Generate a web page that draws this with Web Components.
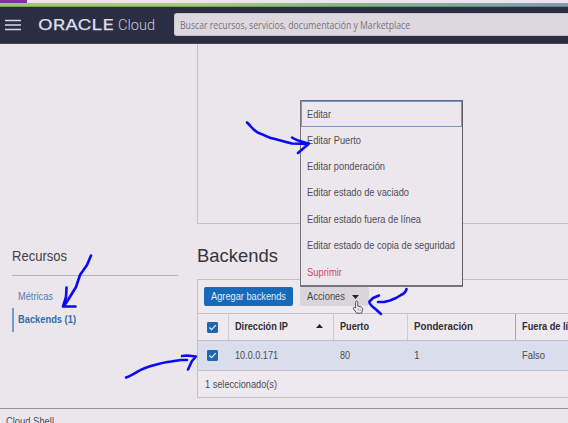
<!DOCTYPE html>
<html lang="es">
<head>
<meta charset="utf-8">
<title>Oracle Cloud - Backends</title>
<style>
html,body{margin:0;height:100%;overflow:hidden}
body{background:#ebe6ec;font:10px "Liberation Sans",Arial,sans-serif;color:#4c4a52}
</style>
</head>
<body>
<cloud-console></cloud-console>
<script>
const define=(name,html,setup)=>customElements.define(name,class extends HTMLElement{
  connectedCallback(){
    if(this.shadowRoot)return;
    this.attachShadow({mode:'open'}).innerHTML=html;
    if(setup)setup.call(this,this.shadowRoot);
  }
});

/* Single-line label, condensed or widened to the width in its "w" attribute. */
define('ui-label','<style>:host{display:inline-block;white-space:nowrap;flex:none}span{display:inline-block;transform-origin:0 50%}</style><span><slot></slot></span>',function(root){
  const w=+this.getAttribute('w');
  if(!w)return;
  const span=root.querySelector('span');
  const natural=span.getBoundingClientRect().width;
  this.style.width=w+'px';
  span.style.transform='scaleX('+w/natural+')';
});

define('ui-check',`<style>:host{display:block;width:11px;height:11px;flex:none}svg{display:block}</style>
<svg width="11" height="11" viewBox="0 0 11 11"><rect width="11" height="11" rx="1.4" fill="#1c68b0"/><path d="M2.4 5.5 4.6 7.7 8.8 3.1" fill="none" stroke="#e9edf6" stroke-width="1.2"/></svg>`);

define('app-header',`<style>
:host{display:block}
.tabs{height:3px;background:#efe3f1}
.tabs i{display:block;width:27px;height:3px;background:#8232a0}
.glow{height:4px;background:linear-gradient(#0000 70%,#1f3d3a80),linear-gradient(90deg,#a0c86c,#a4cc76 35%,#84b880 60%,#80a9a4 85%,#8299ae)}
.bar{display:flex;align-items:center;height:36px;background:#2b2e43;border-bottom:1px solid #4a3f50;box-sizing:content-box}
svg{display:block;flex:none}
.menu{margin-left:5px}
.logo{margin-left:16px}
.search{box-sizing:border-box;height:23px;margin:-1px 0 0 15px;flex:1;background:#ddd8e0;border:1px solid #c9c3cd;border-right:0;border-radius:3px 0 0 3px;display:flex;align-items:center;padding:1px 0 0 5px;color:#77727e;font:10px "Open Sans","Noto Sans",sans-serif}
</style>
<div class="tabs"><i></i></div><div class="glow"></div>
<div class="bar">
<svg class="menu" width="16" height="12" viewBox="0 0 16 12"><path d="M0 1.500H16M0 6H16M0 10.500H16" stroke="#d9d7e4" stroke-width="1.4"/></svg>
<svg class="logo" width="122" height="20" viewBox="0 0 122 20">
<text x="1" y="15" font-family="Inter,sans-serif" font-size="14" font-weight="400" fill="#dddce8" stroke="#dddce8" stroke-width=".25" textLength="76" lengthAdjust="spacingAndGlyphs">ORACLE</text>
<text x="81" y="15.300" font-family="Roboto,sans-serif" font-weight="300" font-size="15.500" fill="#c9c8d6" textLength="37" lengthAdjust="spacingAndGlyphs">Cloud</text></svg>
<div class="search"><ui-label w="230">Buscar recursos, servicios, documentación y Marketplace</ui-label></div>
</div>`);

define('resource-nav',`<style>
:host{display:block;padding:203px 0 0 12px;width:166px}
h2{margin:0;height:28px;border-bottom:1px solid #b8b3ba;font:14.500px/18px "Liberation Sans",sans-serif;color:#444149}
a{box-sizing:border-box;display:flex;align-items:center;height:24px;padding-left:6px;color:#4d7eb6}
a:first-of-type{margin-top:8px}
a.on{font-weight:bold;color:#316dad;border-left:2px solid #6f9cc9;padding:0 0 1px 4px}
</style>
<h2><ui-label w="55">Recursos</ui-label></h2>
<a><ui-label w="35">Métricas</ui-label></a><a class="on"><ui-label w="58">Backends (1)</ui-label></a>`);

define('backend-table',`<style>
:host{display:block;border:1px solid #c5c0c8;border-right:0;background:#eee9ef}
.tools{display:flex;align-items:center;gap:7px;height:33px;padding-left:6px}
button{box-sizing:border-box;border:0;margin:0;padding:0;height:19px;border-radius:2px;font:10px "Liberation Sans",sans-serif;display:flex;align-items:center}
.add{background:#1769b9;color:#e2ebf7;width:89px;justify-content:center}
.act{background:#d9d5da;color:#4b4850;width:69px;padding-left:7px;gap:7px}
.row{display:grid;grid-template-columns:30px 105px 74px 108px 1fr;border-top:1px solid #c5c0c8;height:26px}
.row>*{display:flex;align-items:center;padding:0 0 2px 6px;border-left:1px solid #cfcad1;white-space:nowrap;overflow:hidden}
.row>:first-child{border-left:0;padding:0 0 0 9px}
.head{color:#302d35;font-weight:bold}
.head>:last-child{border-left-color:#aaa5ad}
.data{height:29px;background:#dadeec}
.data>*{border-left-color:transparent;padding-bottom:1px}
.up{margin-left:28px}
.foot{height:26px;border-top:1px solid #c5c0c8;display:flex;align-items:center;padding-left:7px}
</style>
<div class="tools"><button class="add"><ui-label w="75">Agregar backends</ui-label></button>
<button class="act"><ui-label w="38">Acciones</ui-label><svg width="7" height="4"><path d="M0 0H7L3.500 4Z" fill="#25232a"/></svg></button></div>
<div class="row head"><div><ui-check></ui-check></div><div><ui-label w="53">Dirección IP</ui-label><svg class="up" width="7" height="4"><path d="M0 4H7L3.500 0Z" fill="#25232a"/></svg></div><div><ui-label w="29">Puerto</ui-label></div><div><ui-label w="59">Ponderación</ui-label></div><div><ui-label w="62">Fuera de línea</ui-label></div></div>
<div class="row data"><div><ui-check></ui-check></div><div><ui-label w="43">10.0.0.171</ui-label></div><div><ui-label w="10">80</ui-label></div><div>1</div><div><ui-label w="23">Falso</ui-label></div></div>
<div class="foot"><ui-label w="72">1 seleccionado(s)</ui-label></div>`);

define('action-menu',`<style>
:host{display:block;box-sizing:border-box;width:163px;height:187px;border:1px solid #77737c;border-width:1px 1px 2px;border-top-color:#5d6a8a;border-right-color:#625f69;background:#ece7ed}
div{box-sizing:border-box;display:flex;align-items:center;height:26.400px;padding:0 0 1px 6px;color:#504d56}
.focus{border:1px solid #7796c4;padding:0 0 0 5px}
.danger{color:#cf4668}
</style>
<div class="focus"><ui-label w="24">Editar</ui-label></div>
<div><ui-label w="54">Editar Puerto</ui-label></div>
<div><ui-label w="78">Editar ponderación</ui-label></div>
<div><ui-label w="102">Editar estado de vaciado</ui-label></div>
<div><ui-label w="114">Editar estado fuera de línea</ui-label></div>
<div><ui-label w="148">Editar estado de copia de seguridad</ui-label></div>
<div class="danger"><ui-label w="35">Suprimir</ui-label></div>`);

define('pen-marks',`<style>:host{display:block;pointer-events:none}svg{display:block}</style>
<svg width="568" height="423" viewBox="0 0 568 423" fill="none">
<path d="M355.500 302.400C355.500 300.700 357.600 300.700 357.800 302.400V306L361.500 307.200Q363 307.800 362.700 309.600L361.600 313.200H356.800L353.400 308.800C352.800 307.400 354.400 306.600 355.700 308Z" fill="#eeeaf0" stroke="#55515c" stroke-width="1"/>
<path d="M358.200 308.600v2M360.200 309v1.600" stroke="#77727e" stroke-width=".7"/>
<g stroke="#0909f5" stroke-width="2.600" stroke-linecap="round" stroke-linejoin="round">
<path d="M247 122.500C252 127 253 131 260 133.500S268 138 275 139L286 142 292 143.500 308 144M292 137.500C297 141 304 142 309 143.500L305 147 298 153"/>
<path d="M91 255.500 87 265 80 275 76 287 68 300 64 306M66.500 287.500 66 297 63 306.500H75.500"/>
<path d="M406.500 289C406 292 404.500 293.500 401 295L396 298 390 300.500 384 302H378M379 295.500 373 298 369.500 301.500C368.500 304 373 307 376 309.500L381 314"/>
<path d="M126 377.500C132 376 138 370 148 367S164 362 171 361.500L181 360H187M182 356 187 355.500 196 356.500 192 361 188 369.500"/>
</g></svg>`);

define('cloud-console',`<style>
:host{display:block;position:relative;width:568px;height:423px;overflow:hidden}
.body{display:flex;height:364px}
main{margin-left:19px;flex:1;min-width:0}
.chart{height:180px;box-sizing:border-box;border:solid #c5c0c8;border-width:0 0 1px 1px}
h1{margin:21px 0 12px;font:19px/22px "Liberation Sans",sans-serif;color:#37343c}
footer{height:14px;border-top:1px solid #98939b;padding:7px 0 0 6px;line-height:12px}
action-menu{position:absolute;left:300px;top:100px}
pen-marks{position:absolute;left:0;top:0}
</style>
<app-header></app-header>
<div class="body"><resource-nav></resource-nav><main><div class="chart"></div><h1><ui-label w="81">Backends</ui-label></h1><backend-table></backend-table></main></div>
<footer><ui-label w="48">Cloud Shell</ui-label></footer>
<action-menu></action-menu><pen-marks></pen-marks>`);
</script>
</body>
</html>
